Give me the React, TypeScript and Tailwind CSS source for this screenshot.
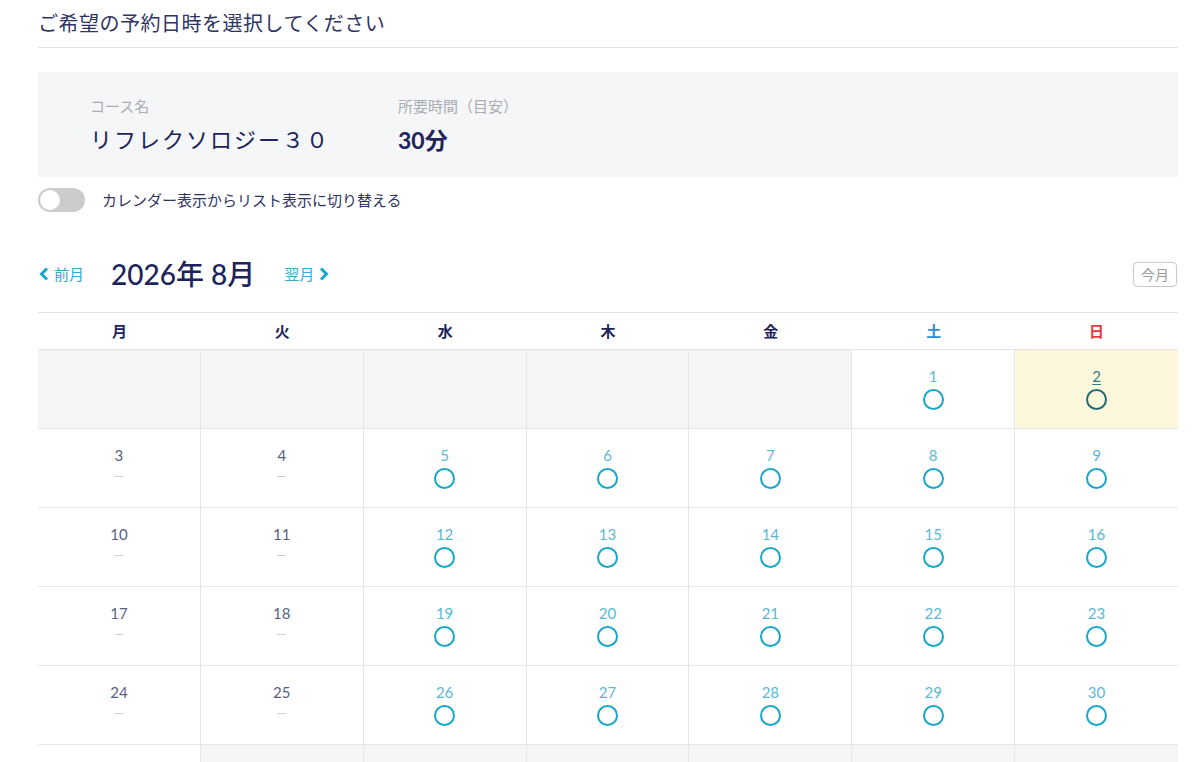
import React from 'react';

const FONT = { fontFamily: 'Lato, "Noto Sans CJK JP", sans-serif' };

type Cell = { day?: number; open?: boolean; selected?: boolean };

const WEEKDAYS = [
  { label: '月', cls: 'text-[#1d2459]' },
  { label: '火', cls: 'text-[#1d2459]' },
  { label: '水', cls: 'text-[#1d2459]' },
  { label: '木', cls: 'text-[#1d2459]' },
  { label: '金', cls: 'text-[#1d2459]' },
  { label: '土', cls: 'text-[#2a8fd0]' },
  { label: '日', cls: 'text-[#e0383b]' },
];

const buildWeeks = (): Cell[][] => {
  const cells: Cell[] = [];
  for (let i = 0; i < 5; i++) cells.push({});
  for (let d = 1; d <= 31; d++) {
    const col = cells.length % 7;
    cells.push({ day: d, open: col >= 2 || d <= 2, selected: d === 2 });
  }
  while (cells.length % 7 !== 0) cells.push({});
  const weeks: Cell[][] = [];
  for (let i = 0; i < cells.length; i += 7) weeks.push(cells.slice(i, i + 7));
  return weeks;
};

const DayCell: React.FC<{ cell: Cell; last: boolean }> = ({ cell, last }) => {
  if (!cell.day) {
    return <div className={`h-[79px] bg-[#f5f5f5] border-b border-[#e6e6e6] ${last ? '' : 'border-r'}`} />;
  }
  return (
    <div
      className={`h-[79px] flex flex-col items-center pt-[16px] border-b border-[#e6e6e6] ${last ? '' : 'border-r'} ${
        cell.selected ? 'bg-[#fdf7dc]' : 'bg-white'
      }`}
    >
      <span
        className={`text-[15px] leading-[20px] ${
          cell.selected
            ? 'text-[#2d7c86] underline underline-offset-2'
            : cell.open
            ? 'text-[#5ab8d6]'
            : 'text-[#5a5f80]'
        }`}
      >
        {cell.day}
      </span>
      {cell.open ? (
        <span
          className={`mt-[3px] w-[21px] h-[21px] rounded-full border-2 ${
            cell.selected ? 'border-[#1f6a75]' : 'border-[#18a6c9]'
          }`}
        />
      ) : (
        <span className="mt-[1px] text-[13px] leading-[20px] text-[#d0d0d0]">—</span>
      )}
    </div>
  );
};

export default function App() {
  const weeks = buildWeeks();
  return (
    <div className="w-[1200px] h-[762px] overflow-hidden bg-white" style={FONT}>
      <div className="ml-[38px] w-[1140px]">
        {/* Title */}
        <div className="pt-[11px] pb-[12px] border-b border-[#e3e3e3]">
          <h1 className="text-[20px] leading-[24px] text-[#2f3561] tracking-[0.5px]">ご希望の予約日時を選択してください</h1>
        </div>

        {/* Course info */}
        <div className="mt-[24px] h-[105px] bg-[#f5f6f8] flex pl-[52px] pt-[24px]">
          <div className="w-[308px]">
            <div className="text-[15px] leading-[20px] text-[#a9acb3]">コース名</div>
            <div className="mt-[10px] text-[22px] leading-[28px] text-[#1d2459] tracking-[2px]">リフレクソロジー３０</div>
          </div>
          <div>
            <div className="text-[15px] leading-[20px] text-[#a9acb3]">所要時間（目安）</div>
            <div className="mt-[10px] text-[23px] leading-[28px] font-bold text-[#1d2459]">30分</div>
          </div>
        </div>

        {/* Toggle */}
        <div className="mt-[11px] flex items-center gap-[17px]">
          <div className="w-[47px] h-[24px] rounded-full bg-[#cccccc] relative">
            <div className="absolute left-[2px] top-[2px] w-[20px] h-[20px] rounded-full bg-white" />
          </div>
          <span className="text-[15px] text-[#2f3561]">カレンダー表示からリスト表示に切り替える</span>
        </div>

        {/* Month nav */}
        <div className="mt-[44px] flex items-center h-[36px]">
          <button className="flex items-center text-[#3aa7cc] text-[15px]">
            <svg width="13" height="16" viewBox="0 0 13 16" className="mr-[3px]">
              <path d="M9 2.5 L3.5 8 L9 13.5" fill="none" stroke="#1ba3cd" strokeWidth="3" />
            </svg>
            前月
          </button>
          <span className="ml-[27px] text-[28px] leading-[36px] font-medium text-[#1d2459]">2026年 8月</span>
          <button className="ml-[29px] flex items-center text-[#3aa7cc] text-[15px]">
            翌月
            <svg width="13" height="16" viewBox="0 0 13 16" className="ml-[3px]">
              <path d="M4 2.5 L9.5 8 L4 13.5" fill="none" stroke="#1ba3cd" strokeWidth="3" />
            </svg>
          </button>
          <button className="ml-auto mr-[1px] h-[25px] px-[7px] border border-[#c8c8c8] rounded-[4px] text-[14px] text-[#9a9a9a]">今月</button>
        </div>

        {/* Calendar */}
        <div className="mt-[20px] border-t border-[#e3e3e3]">
          <div className="grid grid-cols-7 h-[37px] border-b border-[#e3e3e3]">
            {WEEKDAYS.map((w) => (
              <div key={w.label} className={`flex items-center justify-center text-[15px] font-bold ${w.cls}`}>
                {w.label}
              </div>
            ))}
          </div>
          {weeks.map((week, wi) => (
            <div key={wi} className="grid grid-cols-7">
              {week.map((cell, ci) => (
                <DayCell key={ci} cell={cell} last={ci === 6} />
              ))}
            </div>
          ))}
        </div>
      </div>
    </div>
  );
}
